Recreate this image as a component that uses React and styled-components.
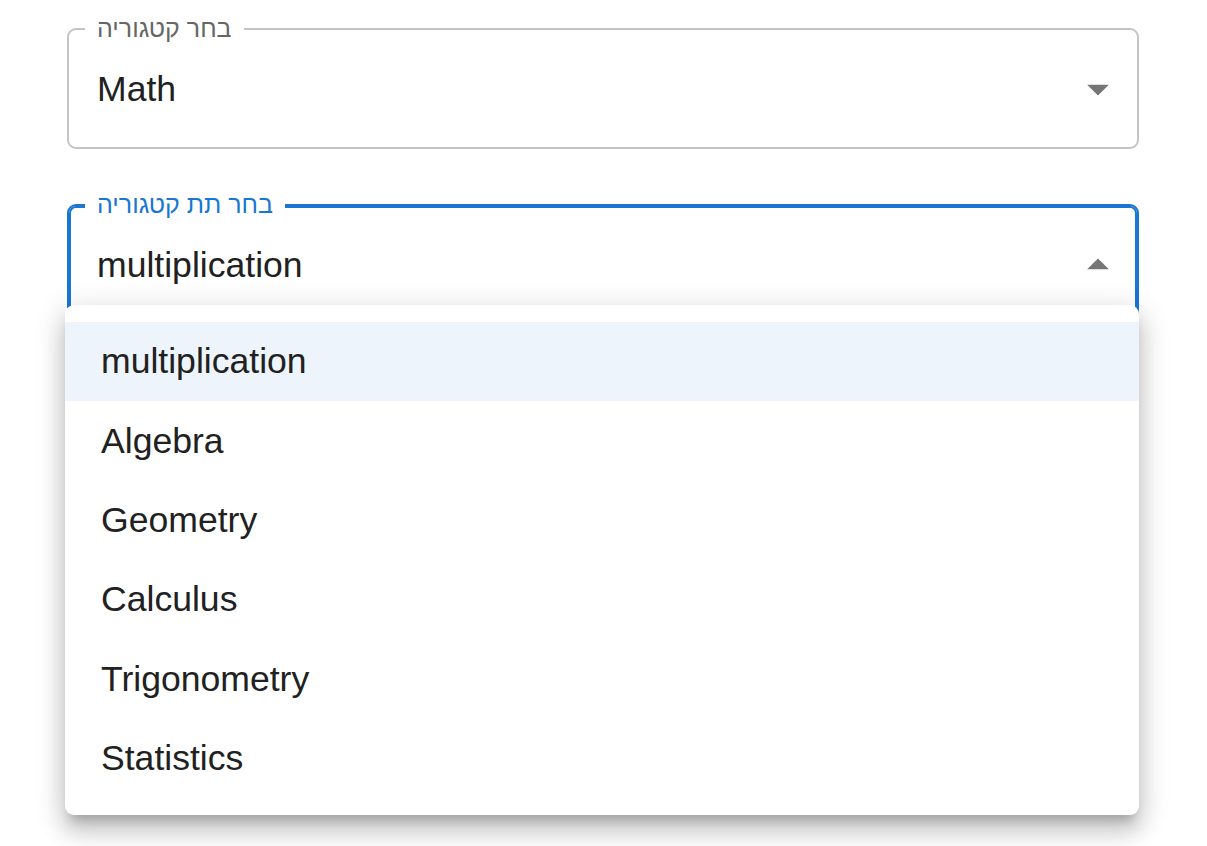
import React from 'react';
import styled, {createGlobalStyle} from "styled-components";

const colors = {
    text: '#212121',
    label: '#666666',
    border: '#c4c4c4',
    primary: '#1976d2',
    icon: '#757575',
    selected: '#edf4fb',
    white: '#ffffff',
}

const GlobalStyle = createGlobalStyle`
  html, body {
    margin: 0;
    padding: 0;
    background: ${colors.white};
    font-family: "Liberation Sans", Arial, sans-serif;
  }
`

export const Page = styled.div`
  display: flex;
  flex-direction: column;
  gap: 55px;
  padding: 28px 68px 0 67px;
  min-height: 100vh;
  box-sizing: border-box;
`

export const Field = styled.div`
  position: relative;
  box-sizing: border-box;
  height: ${({tall}) => tall ? "269px" : "121px"};
  border: 2px solid ${({focused}) => focused ? colors.primary : colors.border};
  box-shadow: ${({focused}) => focused ? `inset 0 0 0 2px ${colors.primary}` : "none"};
  border-radius: 9px;
  display: flex;
  align-items: center;
  padding: 0 13px 0 28px;
  color: ${colors.text};
  font-size: 35.6px;
`

export const Label = styled.span`
  position: absolute;
  top: -17px;
  left: 16px;
  padding: 0 12px;
  background: ${colors.white};
  font-size: 25px;
  line-height: 30px;
  color: ${({focused}) => focused ? colors.primary : colors.label};
`

export const Value = styled.div`
  flex: 1;
  line-height: 40px;
`

export const Arrow = styled.svg`
  width: 52px;
  height: 52px;
  fill: ${colors.icon};
  flex-shrink: 0;
`

export const Menu = styled.ul`
  position: absolute;
  z-index: 10;
  top: 99px;
  left: -4px;
  right: -2px;
  margin: 0;
  padding: 17px 0;
  list-style: none;
  background: ${colors.white};
  border-radius: 9px;
  box-shadow: 0 11px 11px -6px rgba(0,0,0,0.2), 0 17px 22px 2px rgba(0,0,0,0.14), 0 6px 30px 4px rgba(0,0,0,0.12);
`

export const Item = styled.li`
  height: 79.4px;
  display: flex;
  align-items: center;
  padding: 0 36px;
  font-size: 35.6px;
  color: ${colors.text};
  background: ${({selected}) => selected ? colors.selected : "transparent"};
`

const options = ["multiplication", "Algebra", "Geometry", "Calculus", "Trigonometry", "Statistics"];

const App = () => {
    return (
        <>
            <GlobalStyle/>
            <Page>
                <Field>
                    <Label>בחר קטגוריה</Label>
                    <Value>Math</Value>
                    <Arrow viewBox="0 0 24 24"><path d="M7 10l5 5 5-5z"/></Arrow>
                </Field>

                <Field focused>
                    <Label focused>בחר תת קטגוריה</Label>
                    <Value>multiplication</Value>
                    <Arrow viewBox="0 0 24 24"><path d="M7 14l5-5 5 5z"/></Arrow>
                    <Menu>
                        {options.map((o, i) => (
                            <Item key={o} selected={i === 0}>{o}</Item>
                        ))}
                    </Menu>
                </Field>

                <Field tall/>
            </Page>
        </>
    );
};

export default App;
